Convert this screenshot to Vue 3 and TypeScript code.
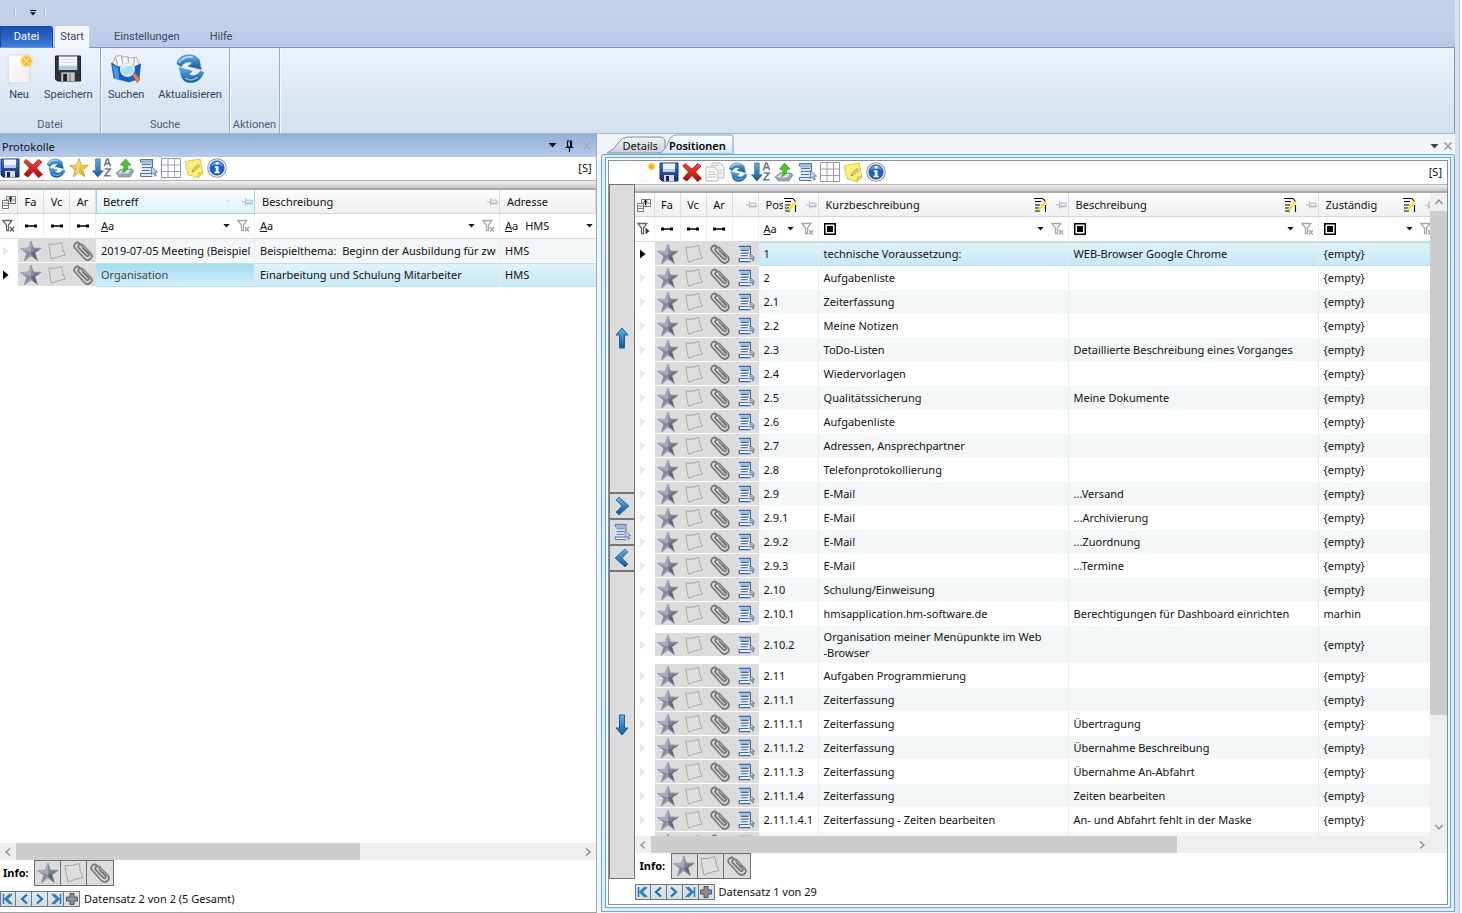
<script setup lang="ts">
interface ToolItem { icon: string; label: string }
interface Position { nr: string; title: string; text: string; who: string; tall?: boolean }

const tools: ToolItem[] = [
  { icon: 'disk', label: 'Speichern' },
  { icon: 'cross', label: 'Löschen' },
  { icon: 'refresh', label: 'Aktualisieren' },
  { icon: 'gold', label: 'Favorit' },
  { icon: 'sort', label: 'Sortieren' },
  { icon: 'export', label: 'Exportieren' },
  { icon: 'list', label: 'Liste' },
  { icon: 'grid', label: 'Tabelle' },
  { icon: 'sticky', label: 'Notiz' },
  { icon: 'info', label: 'Info' },
]
const positionTools: ToolItem[] = [
  { icon: 'newdoc', label: 'Neu' },
  ...tools.map((t) => (t.icon === 'gold' ? { icon: 'copy', label: 'Kopieren' } : t)),
]
// the copy action sits in front of the refresh action
const copyAt = positionTools.findIndex((t) => t.icon === 'copy')
positionTools.splice(copyAt - 1, 0, ...positionTools.splice(copyAt, 1))

const marks = ['star', 'note', 'clip']
const markLabels = ['Favorit', 'Notiz', 'Anhang']
const shortHeads = ['Fa', 'Vc', 'Ar']
const navs: ToolItem[] = [
  { icon: 'first', label: 'Erster Datensatz' },
  { icon: 'prev', label: 'Vorheriger Datensatz' },
  { icon: 'next', label: 'Nächster Datensatz' },
  { icon: 'last', label: 'Letzter Datensatz' },
  { icon: 'plus', label: 'Neuer Datensatz' },
]

const protocols = [
  { subject: '2019-07-05 Meeting (Beispiel)', text: 'Beispielthema:  Beginn der Ausbildung für zwei', address: 'HMS' },
  { subject: 'Organisation', text: 'Einarbeitung und Schulung Mitarbeiter', address: 'HMS' },
]
const selectedProtocol = 1

const e = '{empty}'
const positions: Position[] = [
  { nr: '1', title: 'technische Voraussetzung:', text: 'WEB-Browser Google Chrome', who: e },
  { nr: '2', title: 'Aufgabenliste', text: '', who: e },
  { nr: '2.1', title: 'Zeiterfassung', text: '', who: e },
  { nr: '2.2', title: 'Meine Notizen', text: '', who: e },
  { nr: '2.3', title: 'ToDo-Listen', text: 'Detaillierte Beschreibung eines Vorganges', who: e },
  { nr: '2.4', title: 'Wiedervorlagen', text: '', who: e },
  { nr: '2.5', title: 'Qualitätssicherung', text: 'Meine Dokumente', who: e },
  { nr: '2.6', title: 'Aufgabenliste', text: '', who: e },
  { nr: '2.7', title: 'Adressen, Ansprechpartner', text: '', who: e },
  { nr: '2.8', title: 'Telefonprotokollierung', text: '', who: e },
  { nr: '2.9', title: 'E-Mail', text: '...Versand', who: e },
  { nr: '2.9.1', title: 'E-Mail', text: '...Archivierung', who: e },
  { nr: '2.9.2', title: 'E-Mail', text: '...Zuordnung', who: e },
  { nr: '2.9.3', title: 'E-Mail', text: '...Termine', who: e },
  { nr: '2.10', title: 'Schulung/Einweisung', text: '', who: e },
  { nr: '2.10.1', title: 'hmsapplication.hm-software.de', text: 'Berechtigungen für Dashboard einrichten', who: 'marhin' },
  { nr: '2.10.2', title: 'Organisation meiner Menüpunkte im Web\n-Browser', text: '', who: e, tall: true },
  { nr: '2.11', title: 'Aufgaben Programmierung', text: '', who: e },
  { nr: '2.11.1', title: 'Zeiterfassung', text: '', who: e },
  { nr: '2.11.1.1', title: 'Zeiterfassung', text: 'Übertragung', who: e },
  { nr: '2.11.1.2', title: 'Zeiterfassung', text: 'Übernahme Beschreibung', who: e },
  { nr: '2.11.1.3', title: 'Zeiterfassung', text: 'Übernahme An-Abfahrt', who: e },
  { nr: '2.11.1.4', title: 'Zeiterfassung', text: 'Zeiten bearbeiten', who: e },
  { nr: '2.11.1.4.1', title: 'Zeiterfassung - Zeiten bearbeiten', text: 'An- und Abfahrt fehlt in der Maske', who: e },
  { nr: '', title: '', text: '', who: '' },
]
</script>

<template>
  <svg class="sprite" aria-hidden="true">
    <defs>
      <linearGradient id="gBlue" x1="0" y1="0" x2="0" y2="1"><stop offset="0" stop-color="#62b4e6" /><stop offset="1" stop-color="#10529b" /></linearGradient>
      <linearGradient id="gNavy" x1="0" y1="0" x2="0" y2="1"><stop offset="0" stop-color="#4a78c8" /><stop offset="1" stop-color="#0b2a78" /></linearGradient>
      <linearGradient id="gGold" x1="0" y1="0" x2="0" y2="1"><stop offset="0" stop-color="#ffe680" /><stop offset="1" stop-color="#e0a018" /></linearGradient>
      <linearGradient id="gSteel" x1="0" y1="0" x2="1" y2="1"><stop offset="0" stop-color="#a9aebc" /><stop offset="1" stop-color="#5a6278" /></linearGradient>
      <linearGradient id="gRed" x1="0" y1="0" x2="0" y2="1"><stop offset="0" stop-color="#ee4a3c" /><stop offset="1" stop-color="#a80c10" /></linearGradient>
      <radialGradient id="gSun"><stop offset="0" stop-color="#ff9a10" /><stop offset="0.55" stop-color="#fdbb2a" /><stop offset="1" stop-color="#ffe070" stop-opacity="0" /></radialGradient>
      <linearGradient id="gPaper" x1="0" y1="0" x2="1" y2="1"><stop offset="0" stop-color="#ffffff" /><stop offset="1" stop-color="#f2efec" /></linearGradient>
    </defs>
    <symbol id="disk" viewBox="0 0 20 20"><path d="M1 1h18v18H3l-2-2z" fill="url(#gNavy)" stroke="#132c78" /><path d="M4 1.500h12v8H4z" fill="#eef4fc" /><path d="M4 7h12v3H4z" fill="#b8cdea" /><path d="M5 13h10v6H5z" fill="#d6dae6" /><path d="M7 14h3v5H7z" fill="#10205c" /></symbol>
    <symbol id="cross" viewBox="0 0 20 20"><path d="M3 1.500l7 5.500 5.500-5.500 3.500 2.500-5.500 6 6 6.500-4 3L10 13.500 5 19l-4-2.500L6.500 10 .8 4z" fill="url(#gRed)" stroke="#a01414" stroke-width=".8" /></symbol>
    <symbol id="refresh" viewBox="0 0 32 32"><path d="M2 11C3 4 11 .5 17 1.500c4 .5 7 2.500 9 5.500l2 10-14-3.500 4.500-3.500C15 8 9 9 6.500 14z" fill="url(#gBlue)" stroke="#2d78b4" stroke-width=".6" /><path d="M30.500 20c-1.500 7-8 11.500-14 11-5 0-8-2.500-9.500-6L4.500 15l14 4-4 3.500c4 2.500 9 1 12.500-3.500z" fill="url(#gBlue)" stroke="#2d78b4" stroke-width=".6" /><path d="M4 10c3-5 9-7.500 15-6" fill="none" stroke="#a9d8f3" stroke-width="2" /><path d="M11 26c4 3 9 2.500 13-.5" fill="none" stroke="#7cc0ea" stroke-width="1.500" /></symbol>
    <symbol id="gold" viewBox="0 0 20 20"><path d="M10 .5l2.400 6.700 7.100.2-5.700 4.400 2.100 7L10 14.700 4.200 19l2-7.100L.5 7.500l7.100-.3z" fill="url(#gGold)" stroke="#c09030" stroke-width=".7" /><path d="M10 1v13.500L4.300 19l3-7z" fill="#fff3b0" opacity=".5" /></symbol>
    <symbol id="sort" viewBox="0 0 22 22"><path d="M4 1h5v13h3.500L6.500 21 .5 14H4z" fill="url(#gBlue)" stroke="#1c5a94" stroke-width=".7" /><path d="M13.500 9l3-8h1l3 8M14.500 6.200h5M14 12h6l-6 7.500h6.500" fill="none" stroke="#72787f" stroke-width="1.700" /></symbol>
    <symbol id="export" viewBox="0 0 20 20"><path d="M1 15l5-4h11l2 2-4 6H4z" fill="#9ba8b4" stroke="#71808e" stroke-width=".6" /><path d="M3 15l4-3h9l-3 3.500H4z" fill="#dbe4ea" /><path d="M10.500 1l5.500 6-3 .3c0 4-1.500 6-5.500 7.200 1.500-2.500 1.500-4.500 1.200-7L5.500 7z" fill="#4ec234" stroke="#2c9422" stroke-width=".7" /></symbol>
    <symbol id="list" viewBox="0 0 20 20"><path d="M3 1.500h11v17H3z" fill="#dfe9f6" /><path d="M3 1.500h11v4H3z" fill="#9db9dc" /><path d="M14.500 1v8M2.500 1.500h12M4 6.500h9M4 9.500h9M4 12.500h8M2.500 15.500h12M2.500 18.500h12M2.500 1.500v3M2.500 15v3" fill="none" stroke="#54759f" stroke-width="1.100" /><path d="M13.500 8.500v8l2-1.500 1.500 3.200 1.300-.8-1.400-3 2.600-.4z" fill="#c3d3e8" stroke="#506d94" stroke-width=".8" /></symbol>
    <symbol id="grid" viewBox="0 0 20 20"><path d="M.5.500h19v19H.5z" fill="#fff" stroke="#9397a2" /><path d="M7 .5v19M13.500.5v19M.5 7h19M.5 13.500h19" stroke="#9ca0ad" /></symbol>
    <symbol id="sticky" viewBox="0 0 20 20"><path d="M1 3.500L16 1l3 14-5 4.500L4 17z" fill="#fbee7a" stroke="#d3bc3c" stroke-width=".8" /><path d="M14 19.500l.5-5 4.500.5z" fill="#f6d84c" stroke="#c7ac32" stroke-width=".5" /><path d="M8 14l1-2.500 5-5 1.500 1.500-5 5z" fill="#f8df74" stroke="#8c8244" stroke-width=".8" /></symbol>
    <symbol id="info" viewBox="0 0 22 22"><circle cx="11" cy="11" r="10.200" fill="#fff" stroke="#8a94a4" stroke-width="1.200" /><circle cx="11" cy="11" r="8" fill="#1f5fbf" stroke="#18458e" stroke-width=".6" /><path d="M4.500 9a6.700 6.700 0 0113 0c-4-2-9-2-13 0z" fill="#5f9be4" /><path d="M9.700 4.500h3v2.600h-3zM8.500 9h4.200v6h1.300v1.700H8.300V15h1.400v-4.300H8.500z" fill="#fff" /></symbol>
    <symbol id="copy" viewBox="0 0 20 20"><path d="M7 1h8l4 4v11H7z" fill="#f2f3f4" stroke="#b9bdc2" /><path d="M1 5h8l4 4v10H1z" fill="#f8f8f8" stroke="#b4b8bd" /><path d="M3 10h7M3 12.500h8M3 15h8M14 8h3M14 11h3M9 3.500h4" stroke="#c3c6ca" /></symbol>
    <symbol id="newdoc" viewBox="0 0 20 20"><path d="M2 3h13v16H2z" fill="#fdfdfd" /><path d="M2 19h13" stroke="#f1f1f1" /><circle cx="15.500" cy="4.500" r="4.500" fill="url(#gSun)" /></symbol>
    <symbol id="star" viewBox="0 0 22 22"><path d="M11 1l2.400 7 7.800.2-6.300 4.600 2.500 7.700-6.400-4.700L4.400 21l2.300-7.800L.5 8.500l7.700-.3z" fill="url(#gSteel)" stroke="#858b9a" stroke-width=".7" /><path d="M11 1v12L.5 8.500l7.700-.3zM11 13L4.400 21l6.600-5.200z" fill="#bfc3cd" opacity=".55" /><path d="M11 13l10.200-4.800-6.300 4.600 2.500 7.700z" fill="#4e566c" opacity=".55" /></symbol>
    <symbol id="note" viewBox="0 0 22 22"><path d="M2 3.500Q10 4.500 16 1.500q1 9 4 14-7 1-15 4.500Q3 12 2 3.500z" fill="#dedede" stroke="#a2a2a2" stroke-width="1" /></symbol>
    <symbol id="clip" viewBox="0 0 22 22"><path d="M14.500 10.500L7.800 3.600C4.800.8.300 5 3.200 8.200l9.500 10.500c3.400 3.400 9.300-.8 6.200-5L10.500 5C8 2.800 4.800 5.800 7 8.200l7.300 7.500c1.800 1.400 3.400-.6 2-2.200L10 7.200" fill="none" stroke="#787674" stroke-width="1.800" /><path d="M3.500 7.500L13 18M8 4l6 6M11 5.500l7.500 8" stroke="#c8c6c3" stroke-width=".6" /></symbol>
    <symbol id="doc" viewBox="0 0 20 20"><path d="M3 1.500h12v17H3z" fill="#e6eef8" /><path d="M3 1.500h12v4H3z" fill="#a3c0e6" /><path d="M2 1.500h13v8M4 6h9M4 9h9M4 12h8M2 15h11M2 18.500h13M2.500 15v3.500" fill="none" stroke="#43699f" stroke-width="1.200" /><path d="M14.500 9v7l1.700-1.300 1.300 2.800 1.300-.6-1.200-2.800h2z" fill="#a9bdd8" stroke="#4b6a96" stroke-width=".8" /></symbol>
    <symbol id="up" viewBox="0 0 14 22"><path d="M7 1l6 7H9.500v13h-5V8H1z" fill="url(#gBlue)" stroke="#1d5f9f" /></symbol>
    <symbol id="down" viewBox="0 0 14 22"><path d="M7 21l6-7H9.500V1h-5v13H1z" fill="url(#gBlue)" stroke="#1d5f9f" /></symbol>
    <symbol id="bigright" viewBox="0 0 16 20"><path d="M2 4l3-3 10 9L5 19l-3-3 6-6z" fill="url(#gBlue)" stroke="#2c608f" stroke-width=".8" /></symbol>
    <symbol id="bigleft" viewBox="0 0 16 20"><path d="M14 4l-3-3L1 10l10 9 3-3-6-6z" fill="url(#gBlue)" stroke="#2c608f" stroke-width=".8" /></symbol>
    <symbol id="first" viewBox="0 0 14 14"><path d="M2.500 2v10M11 2L6 7l5 5M9 2L4 7l5 5" fill="none" stroke="#2f7fb8" stroke-width="1.600" /></symbol>
    <symbol id="prev" viewBox="0 0 14 14"><path d="M10 2.500L5 7l5 4.500" fill="none" stroke="#24709f" stroke-width="2.200" /></symbol>
    <symbol id="next" viewBox="0 0 14 14"><path d="M4 2.500L9 7l-5 4.500" fill="none" stroke="#24709f" stroke-width="2.200" /></symbol>
    <symbol id="last" viewBox="0 0 14 14"><path d="M11.500 2v10M3 2l5 5-5 5M5 2l5 5-5 5" fill="none" stroke="#2f7fb8" stroke-width="1.600" /></symbol>
    <symbol id="plus" viewBox="0 0 14 14"><path d="M5 1.500h4V5h3.500v4H9v3.500H5V9H1.500V5H5z" fill="#8f8f8f" stroke="#555" /></symbol>
    <symbol id="pin" viewBox="0 0 12 10"><path d="M0 5h4M4 1v8M4 3h7v4H4M4 6h7" fill="none" stroke="#a5b4c4" /></symbol>
    <symbol id="funnel" viewBox="0 0 14 14"><path d="M.8 1.500h9L6.500 6v5.500H4.500V6z" fill="#fff" stroke="currentColor" stroke-width="1.300" /><path d="M8 8l4 4.500M12 8l-4 4.500" stroke="currentColor" stroke-width="1.500" /></symbol>
    <symbol id="funnelrun" viewBox="0 0 14 14"><path d="M.8 1.500h9L6.500 6v5.500H4.500V6z" fill="#fff" stroke="#666" stroke-width="1.300" /><path d="M8.500 5.500v7L12.500 9z" fill="#444" /></symbol>
    <symbol id="dash" viewBox="0 0 14 6"><path d="M1 3h12" stroke="#000" stroke-width="1.500" /><path d="M1 1.500h3v3H1zM10 1.500h3v3h-3z" /></symbol>
    <symbol id="tri" viewBox="0 0 8 5"><path d="M0 0h8L4 4.500z" fill="currentColor" /></symbol>
    <symbol id="fields" viewBox="0 0 14 14"><path d="M4.500 1.500h9v7h-9zM4.500 5h9M9 1.500v7" fill="#fff" stroke="#777" /><path d="M.5 5.500h6v8h-6zM.5 8h6M.5 10.500h6" fill="#fff" stroke="#777" /><path d="M8.500 7V2M7 4l1.500-2L10 4" fill="none" stroke="#000" stroke-width="1" /></symbol>
    <symbol id="edit" viewBox="0 0 14 16"><path d="M1 1.500h9M2 4.500h6M2 8h5M2 11h4M2 14h5M10 1.500l2.500 3M12.500 8v7" fill="none" stroke="#000" stroke-width="1.100" /><path d="M5.500 13l7-8" stroke="#f3ea00" stroke-width="2.200" /></symbol>
    <symbol id="square" viewBox="0 0 12 12"><path d="M.75.750h10.500v10.500H.75z" fill="#fff" stroke="#000" stroke-width="1.500" /><path d="M3 3h6v6H3z" /></symbol>
    <symbol id="bignew" viewBox="0 0 32 32"><path d="M4.500 1.500h23v30h-23z" fill="url(#gPaper)" stroke="#d9d4d2" /><circle cx="24" cy="8" r="7.800" fill="url(#gSun)" /><path d="M21 5l6 6M27 5l-6 6" stroke="#fff0a0" stroke-width="1.500" /></symbol>
    <symbol id="bigdisk" viewBox="0 0 28 28"><path d="M1 1h26v26H3l-2-2z" fill="#30343a" stroke="#1a1c20" /><path d="M4.500 1.500h19v14h-19z" fill="#f4f8fb" /><path d="M4.500 11h19v4.500h-19z" fill="#a9cfe4" /><path d="M6 4.500h16M6 7.500h16" stroke="#cfdae2" /><path d="M7 18h14v9H7z" fill="#c3c5c8" /><path d="M9 19.500h4V27H9z" fill="#222" /><path d="M16 19v8" stroke="#8d9094" stroke-width="2" /></symbol>
    <symbol id="bigsearch" viewBox="0 0 32 32"><path d="M5 3l6-1 1 2 6-1 1 2 8-1 3 8-3 8H5L2 9z" fill="#f6f6f6" stroke="#9a9a9a" stroke-width=".8" /><path d="M5 4l2 9M11 3l2 9M18 4l1 8M25 5l-1 8" stroke="#8d8d8d" stroke-width=".9" /><path d="M.5 10l6.500 4h18l6.500-3-1.500 16-11 3.500L3 26z" fill="#1560c4" stroke="#0f4798" stroke-width=".6" /><path d="M1.500 12l6 4 1.500 13-5-3z" fill="#4c98e8" /><path d="M23 23l3-2 5 7-3 3z" fill="#ea8440" stroke="#b4571c" stroke-width=".7" /><circle cx="17.500" cy="17" r="7" fill="#a9dcf6" stroke="#dfe6ec" stroke-width="2" /><path d="M13 15c1-3 5-4 8-2" fill="none" stroke="#fff" stroke-width="1.600" /></symbol>
    <symbol id="vpin" viewBox="0 0 9 12"><path d="M2.500 1v6h4V1zM5.500 1v6M.5 7.500h8M4.500 8v4" fill="none" stroke="#111" stroke-width="1.200" /></symbol>
    <symbol id="close" viewBox="0 0 10 10"><path d="M1.500 1.500l7 7M8.500 1.500l-7 7" fill="none" stroke="currentColor" stroke-width="1.700" /></symbol>
    <symbol id="chev" viewBox="0 0 10 10"><path d="M7 1.500L3 5l4 3.500" fill="none" stroke="#8d8d8d" stroke-width="1.400" /></symbol>
    <symbol id="rowmark" viewBox="0 0 7 10"><path d="M1 .5v9L6.500 5z" fill="currentColor" /></symbol>
  </svg>

  <div class="app">
    <div class="window">
      <header class="titlebar">
        <i class="tick"></i>
        <button class="quick" aria-label="Schnellzugriff anpassen"><i class="bar"></i><svg class="tri"><use href="#tri" /></svg></button>
        <i class="tick"></i>
      </header>
      <nav class="tabs">
        <button class="file">Datei</button>
        <button class="active">Start</button>
        <button class="wide">Einstellungen</button>
        <button>Hilfe</button>
      </nav>
      <section class="ribbon">
        <div class="group">
          <div class="cmds">
            <button class="cmd neu"><svg><use href="#bignew" /></svg>Neu</button>
            <button class="cmd"><svg class="sm"><use href="#bigdisk" /></svg>Speichern</button>
          </div>
          <span class="caption">Datei</span>
        </div>
        <div class="group search">
          <div class="cmds">
            <button class="cmd"><svg><use href="#bigsearch" /></svg>Suchen</button>
            <button class="cmd"><svg><use href="#refresh" /></svg>Aktualisieren</button>
          </div>
          <span class="caption">Suche</span>
        </div>
        <div class="group actions"><span class="caption">Aktionen</span></div>
      </section>

      <main class="docks">
        <section class="left">
          <header class="dockhead">
            <span>Protokolle</span>
            <button class="bare" aria-label="Fenstermenü"><svg class="tri"><use href="#tri" /></svg></button>
            <button class="bare" aria-label="Anheften"><svg class="vpin"><use href="#vpin" /></svg></button>
            <button class="bare dim" aria-label="Schließen"><svg class="close"><use href="#close" /></svg></button>
          </header>
          <div class="toolbar">
            <button v-for="t in tools" :key="t.icon" class="tool" :aria-label="t.label"><svg><use :href="'#' + t.icon" /></svg></button>
            <span class="state">[S]</span>
          </div>
          <div class="splitter"></div>
          <div class="gridbox">
            <table class="grid protocols">
              <colgroup><col class="w18" /><col class="w26" /><col class="w26" /><col class="w26" /><col class="w159" /><col class="w245" /><col /></colgroup>
              <thead>
                <tr class="head">
                  <th><svg class="i14"><use href="#fields" /></svg></th>
                  <th v-for="h in shortHeads" :key="h" class="short">{{ h }}</th>
                  <th class="sorted"><div class="hc"><span>Betreff</span><svg class="tri pale"><use href="#tri" /></svg><svg class="pin"><use href="#pin" /></svg></div></th>
                  <th><div class="hc"><span>Beschreibung</span><svg class="pin"><use href="#pin" /></svg></div></th>
                  <th><div class="hc"><span>Adresse</span></div></th>
                </tr>
                <tr class="filter">
                  <td class="dark"><svg class="i14"><use href="#funnel" /></svg></td>
                  <td v-for="h in shortHeads" :key="h" class="mid"><svg class="dash"><use href="#dash" /></svg></td>
                  <td v-for="n in 2" :key="n"><div class="fc"><u>A</u>a<button class="bare push" aria-label="Filterwerte"><svg class="arrow"><use href="#tri" /></svg></button><button class="bare dim" aria-label="Filter löschen"><svg class="i14"><use href="#funnel" /></svg></button></div></td>
                  <td><div class="fc"><u>A</u>a<input class="query" value="HMS" aria-label="Filter Adresse" /><button class="bare" aria-label="Filterwerte"><svg class="arrow"><use href="#tri" /></svg></button></div></td>
                </tr>
              </thead>
              <tbody>
                <tr v-for="(p, i) in protocols" :key="p.subject" :class="{ alt: i % 2 === 0, selected: i === selectedProtocol }">
                  <td class="gutter"><svg class="mark"><use href="#rowmark" /></svg></td>
                  <td v-for="m in marks" :key="m" class="icon"><div><svg :class="m"><use :href="'#' + m" /></svg></div></td>
                  <td class="subject"><div class="txt">{{ p.subject }}</div></td>
                  <td><div class="txt">{{ p.text }}</div></td>
                  <td><div class="txt">{{ p.address }}</div></td>
                </tr>
              </tbody>
            </table>
          </div>
          <div class="hscroll"><svg class="chev"><use href="#chev" /></svg><div class="track"><div class="thumb left-thumb"></div></div><svg class="chev flip"><use href="#chev" /></svg></div>
          <div class="inforow"><b>Info:</b><div class="infos"><button v-for="(m, i) in marks" :key="m" :aria-label="markLabels[i]"><svg><use :href="'#' + m" /></svg></button></div></div>
          <div class="pager"><button v-for="n in navs" :key="n.icon" :aria-label="n.label"><svg><use :href="'#' + n.icon" /></svg></button><span>Datensatz 2 von 2 (5 Gesamt)</span></div>
        </section>

        <section class="right">
          <header class="doctabs">
            <svg class="tabshapes" aria-hidden="true" viewBox="0 0 140 20"><defs><linearGradient id="tabA" x1="0" y1="0" x2="0" y2="1"><stop offset="0" stop-color="#f2f4f8" /><stop offset="1" stop-color="#c6cfdd" /></linearGradient><linearGradient id="tabB" x1="0" y1="0" x2="0" y2="1"><stop offset="0" stop-color="#fff" /><stop offset="1" stop-color="#d5e8f9" /></linearGradient></defs><path d="M4 19Q11 16 15 9q4-6 10-6h32q5 0 5 5v11z" fill="url(#tabA)" stroke="#7d8da4" /><path d="M56 20Q62 17 65 9q2-8 9-8h54q2 0 2 2v17z" fill="url(#tabB)" stroke="#6aa5c9" /></svg>
            <button class="dt first">Details</button>
            <button class="dt current">Positionen</button>
            <button class="bare push" aria-label="Tabliste"><svg class="tri"><use href="#tri" /></svg></button>
            <button class="bare shut" aria-label="Schließen"><svg class="close"><use href="#close" /></svg></button>
          </header>
          <div class="frame"><div class="frame2"><div class="content">
            <div class="toolbar indented">
              <button v-for="t in positionTools" :key="t.icon" class="tool" :aria-label="t.label"><svg><use :href="'#' + t.icon" /></svg></button>
              <span class="state">[S]</span>
            </div>
            <div class="work">
              <aside class="mover">
                <button class="stretch" aria-label="Nach oben"><svg class="v"><use href="#up" /></svg></button>
                <button aria-label="Einrücken"><svg class="h"><use href="#bigright" /></svg></button>
                <button aria-label="Liste"><svg class="l"><use href="#list" /></svg></button>
                <button aria-label="Ausrücken"><svg class="h"><use href="#bigleft" /></svg></button>
                <button class="stretch" aria-label="Nach unten"><svg class="v"><use href="#down" /></svg></button>
              </aside>
              <div class="panel">
                <div class="splitter"></div>
                <div class="scroller">
                  <div class="gridbox">
                    <table class="grid positions">
                      <colgroup><col class="w20" /><col class="w26" /><col class="w26" /><col class="w26" /><col class="w26" /><col class="w60" /><col class="w250" /><col class="w250" /><col /></colgroup>
                      <thead>
                        <tr class="head">
                          <th><svg class="i14"><use href="#fields" /></svg></th>
                          <th v-for="h in shortHeads" :key="h" class="short">{{ h }}</th>
                          <th><div class="hc"><svg class="pin"><use href="#pin" /></svg></div></th>
                          <th><div class="hc narrow"><span>Pos</span><svg class="edit"><use href="#edit" /></svg><svg class="pin"><use href="#pin" /></svg></div></th>
                          <th v-for="h in ['Kurzbeschreibung', 'Beschreibung', 'Zuständig']" :key="h"><div class="hc"><span>{{ h }}</span><svg class="edit"><use href="#edit" /></svg><svg class="pin"><use href="#pin" /></svg></div></th>
                        </tr>
                        <tr class="filter">
                          <td><svg class="i14"><use href="#funnelrun" /></svg></td>
                          <td v-for="h in shortHeads" :key="h" class="mid"><svg class="dash"><use href="#dash" /></svg></td>
                          <td></td>
                          <td><div class="fc"><u>A</u>a<button class="bare push" aria-label="Filterwerte"><svg class="arrow"><use href="#tri" /></svg></button><button class="bare dim" aria-label="Filter löschen"><svg class="i14"><use href="#funnel" /></svg></button></div></td>
                          <td v-for="n in 3" :key="n"><div class="fc"><svg class="sq"><use href="#square" /></svg><button class="bare push" aria-label="Filterwerte"><svg class="arrow"><use href="#tri" /></svg></button><button class="bare dim" aria-label="Filter löschen"><svg class="i14"><use href="#funnel" /></svg></button></div></td>
                        </tr>
                      </thead>
                      <tbody>
                        <tr v-for="(p, i) in positions" :key="p.nr" :class="{ alt: i % 2 === 0, selected: i === 0, tall: p.tall }">
                          <td class="gutter"><svg class="mark"><use href="#rowmark" /></svg></td>
                          <td v-for="m in [...marks, 'doc']" :key="m" class="icon"><div><svg :class="m"><use :href="'#' + m" /></svg></div></td>
                          <td class="nr"><div class="txt">{{ p.nr }}</div></td>
                          <td><div class="txt">{{ p.title }}</div></td>
                          <td><div class="txt">{{ p.text }}</div></td>
                          <td><div class="txt">{{ p.who }}</div></td>
                        </tr>
                      </tbody>
                    </table>
                  </div>
                  <div class="vscroll"><svg class="chev top"><use href="#chev" /></svg><div class="vtrack"><div class="vthumb"></div></div><svg class="chev bottom"><use href="#chev" /></svg></div>
                </div>
                <div class="hscroll"><svg class="chev"><use href="#chev" /></svg><div class="track"><div class="thumb right-thumb"></div></div><svg class="chev flip"><use href="#chev" /></svg><i class="corner"></i></div>
                <div class="inforow"><b>Info:</b><div class="infos"><button v-for="(m, i) in marks" :key="m" :aria-label="markLabels[i]"><svg><use :href="'#' + m" /></svg></button></div></div>
              </div>
            </div>
            <div class="pager lower"><button v-for="n in navs" :key="n.icon" :aria-label="n.label"><svg><use :href="'#' + n.icon" /></svg></button><span>Datensatz 1 von 29</span></div>
          </div></div></div>
        </section>
      </main>
    </div>
    <div class="edge"></div>
  </div>
</template>

<style>
html, body, #app { height: 100%; }
body { margin: 0; overflow: hidden; background: #fff; }
</style>

<style scoped>
* { box-sizing: border-box; }
.sprite { position: absolute; width: 0; height: 0; }
svg { display: block; flex: none; }
button, input { font: inherit; color: inherit; padding: 0; border: 0; background: none; }
button { display: flex; align-items: center; justify-content: center; }
.app { display: flex; height: 100vh; padding-right: 2px; font: 11px/16px "Noto Sans", "Open Sans", sans-serif; color: #111; }
.window { flex: 1; min-width: 0; display: flex; flex-direction: column; }
.edge { width: 5px; background: #d6e1f1; border-right: 1px solid #bfc5d8; }

.titlebar { height: 26px; display: flex; align-items: center; padding-left: 14px; background: linear-gradient(#c3d4ea, #bfd0e8); }
.tick { width: 2px; height: 8px; border-left: 1px solid #a9b8d0; background: #e7eef8; }
.titlebar .tick:last-child { margin-left: 8px; }
.quick { flex-direction: column; gap: 1px; margin-left: 14px; }
.bar { width: 6px; height: 1px; background: #000; }
.tri { width: 9px; height: 5px; }
.quick .tri { width: 6px; height: 4px; }
.tabs, .ribbon { font-family: Roboto, "Noto Sans", sans-serif; }
.tabs { height: 22px; display: flex; gap: 2px; color: #3a4660; background: linear-gradient(#bfd0e8, #b8cae5); border-bottom: 1px solid #7d93bd; }
.tabs button { padding: 0 11px; }
.tabs .file { width: 53px; color: #fff; background: linear-gradient(#1f4fae, #2a62c4 50%, #3f7ede); border-radius: 0 3px 0 0; border: 1px solid #1d479a; border-bottom: 0; }
.tabs .active { width: 34px; padding: 0; height: 22px; background: #f4f8fe; border-radius: 2px 2px 0 0; }
.tabs .wide { margin-left: 12px; margin-right: 6px; }
.ribbon { height: 86px; display: flex; color: #33405c; background: linear-gradient(#edf3fd, #dbe6f3 60%, #d4e2f0); border-bottom: 1px solid #a8b6cb; border-right: 1px solid #8596b8; }
.group { display: flex; flex-direction: column; justify-content: space-between; align-items: center; width: 101px; padding: 4px 0 0 0; border-right: 1px solid #9daac2; box-shadow: 1px 0 #f3f7fc; }
.group.search { width: 129px; }
.group.actions { width: 50px; justify-content: flex-end; }
.cmds { display: flex; width: 100%; }
.cmd { flex-direction: column; justify-content: flex-start; gap: 2px; padding: 0 6px; }
.cmd svg { width: 32px; height: 33px; padding: 1px; }
.cmd svg.sm { padding: 3px 2px; }
.cmd.neu { padding: 0 3px; }
.search .cmd { padding: 0 7px; }
.caption { color: #4d5a78; }

.docks { flex: 1; min-height: 0; display: flex; background: #f1f6fc; }
.left { width: 41%; max-width: 597px; flex: none; display: flex; flex-direction: column; background: #fff; border-right: 1px solid #a3aab6; border-bottom: 1px solid #a0a0a0; padding-bottom: 5px; }
.dockhead { height: 23px; display: flex; align-items: center; gap: 8px; padding: 0 4px 0 2px; background: linear-gradient(#91b0d8, #b7cbe9); }
.dockhead span { flex: 1; padding-top: 2px; }
.vpin { width: 9px; height: 12px; }
.close { width: 10px; height: 10px; }
.dim { color: #a8a8a8; }
.toolbar { height: 23px; display: flex; align-items: center; gap: 3px; padding-bottom: 1px; }
.tool svg { width: 20px; height: 20px; }
.state { margin-left: auto; padding-right: 4px; }
.splitter { height: 10px; flex: none; border-top: 1px solid #b4b4b4; border-bottom: 2px solid #a8a8ac; background: linear-gradient(#f0f0f0, #c8c8ca); }
.panel .splitter { height: 9px; }
.gridbox { flex: 1; min-height: 0; min-width: 0; overflow: hidden; }
.grid { table-layout: fixed; border-spacing: 0; width: 100%; }
.positions { width: calc(100% + 8px); }
.w18 { width: 18px; } .w20 { width: 20px; } .w26 { width: 26px; } .w60 { width: 60px; }
.w159 { width: 159px; } .w245 { width: 245px; } .w250 { width: 250px; }
th, td { padding: 0; overflow: hidden; white-space: nowrap; text-align: left; font-weight: 400; vertical-align: middle; }
.head th { height: 24px; background: linear-gradient(#fff, #f6f6f7 45%, #f0f1f3); border-right: 1px solid #dadde1; border-bottom: 1px solid #d5d7da; }
.head .short { text-align: center; }
.head .sorted { background: linear-gradient(#fcfeff, #dff2fa); border-left: 1px solid #9fd5ea; border-right-color: #9fd5ea; border-bottom-color: #9fd5ea; }
.hc { display: flex; align-items: center; gap: 9px; padding: 0 1px 0 7px; justify-content: flex-end; }
.sorted .hc { padding-left: 6px; }
.hc span { flex: 1; overflow: hidden; }
.narrow { gap: 0; }
.narrow .pin { margin-left: 9px; }
.pin { width: 11px; height: 10px; }
.edit { width: 14px; height: 16px; }
.pale { color: #d5dfe6; height: 3px; }
.i14 { width: 14px; height: 14px; margin: 0 auto; }
.filter td { height: 25px; border-right: 1px solid #eef0f2; border-bottom: 1px solid #d9dcdf; background: #fff; }
.dark { color: #666; }
.mid svg { width: 14px; height: 6px; margin: 0 auto; }
.fc { display: flex; align-items: center; padding: 0 3px 0 5px; }
.arrow { width: 7px; height: 4px; }
.push { margin-left: auto; }
.fc .dim { margin-left: 7px; }
.sq { width: 12px; height: 12px; }
.query { width: 30px; flex: 1; margin-left: 7px; outline: 0; }
tbody td { height: 24px; border-right: 1px solid #e6edf1; border-bottom: 1px solid #fff; }
tbody td.gutter, tbody td.icon { border-right: 0; background: #fff; }
.protocols td:last-child { border-right: 0; }
.alt td { background: #f3f7f8; }
.alt td.gutter { background: #fff; }
.selected td, .selected.alt td { background: linear-gradient(#e1f2f9, #c6e9f6); border-top: 1px solid #b4dff0; border-bottom: 1px solid #b9e1ef; }
.selected td.gutter, .selected td.icon, .selected.alt td.gutter, .selected.alt td.icon { background: #fff; border-top: 0; border-bottom-color: #fff; }
.protocols .selected .subject { background: linear-gradient(#a5dcf2, #d0effb); color: #444; }
.mark { width: 7px; height: 10px; margin: 0 0 0 4px; color: #e9e9e9; }
.protocols .mark { margin-left: 2px; }
.selected .mark { color: #000; }
.icon div { height: 23px; display: flex; align-items: center; justify-content: center; background: #dcdcdc; }
.icon svg { width: 22px; height: 22px; }
.icon svg.doc { width: 18px; height: 20px; }
.icon svg.note { width: 20px; height: 20px; }
.txt { padding: 0 0 0 5px; margin-right: 3px; overflow: hidden; white-space: pre; }
.nr .txt { margin-right: 0; }
.tall td { height: 38px; }

.hscroll { height: 17px; flex: none; display: flex; align-items: center; background: #efefef; }
.chev { width: 10px; height: 10px; margin: 0 3px; }
.flip { transform: rotate(180deg); }
.track { flex: 1; height: 100%; }
.thumb { height: 100%; background: #cdcdcd; }
.left-thumb { width: 61%; }
.right-thumb { width: 69%; }
.corner { width: 17px; }
.inforow { height: 26px; flex: none; display: flex; align-items: center; padding-left: 3px; }
.inforow b { width: 31px; font-weight: 700; color: #000; }
.infos { display: flex; border: 1px solid #6e6e6e; }
.infos button { width: 26px; height: 24px; background: #dcdcdc; border-right: 1px solid #6e6e6e; }
.infos button:last-child { border-right: 0; }
.infos svg { width: 22px; height: 22px; }
.pager { display: flex; align-items: center; height: 16px; margin-top: 5px; flex: none; }
.pager button { width: 16px; height: 16px; border: 1px solid #777; border-left-width: 0; background: linear-gradient(#dfe8ef, #d0dbe4); }
.pager button:first-child { border-left-width: 1px; }
.pager svg { width: 14px; height: 14px; }
.pager span { padding-left: 4px; }

.right { flex: 1; min-width: 0; display: flex; flex-direction: column; padding: 0 0 1px 4px; }
.doctabs { height: 20px; flex: none; display: flex; align-items: center; position: relative; padding: 4px 2px 0 20px; }
.tabshapes { position: absolute; left: 2px; top: 0; width: 140px; height: 20px; }
.dt { position: relative; padding: 0 2px; }
.dt.current { font-weight: 600; color: #000; margin-left: 7px; }
.doctabs .tri { color: #3c4250; }
.shut { margin-left: 4px; color: #999; }
.frame { flex: 1; min-height: 0; display: flex; border: 1px solid #6fa8cb; border-radius: 3px 3px 0 0; padding: 2px 3px 3px; background: #dcecfa; }
.frame2 { flex: 1; min-width: 0; display: flex; border: 1px solid #6fa5c8; padding: 2px; background: #f4f9fe; }
.content { flex: 1; min-width: 0; display: flex; flex-direction: column; background: #fff; border: 1px solid #858d96; padding-bottom: 4px; }
.indented { padding-left: 27px; }
.content .state { padding-right: 5px; }
.work { flex: 1; min-height: 0; display: flex; }
.mover { width: 26px; display: flex; flex-direction: column; border: 1px solid #747474; background: #dcdcdc; }
.mover button { height: 26px; border-bottom: 2px solid #747474; }
.mover .stretch { flex: 1; }
.mover button:last-child { border-bottom: 0; }
.v { width: 14px; height: 22px; }
.h { width: 16px; height: 20px; }
.l { width: 18px; height: 20px; }
.panel { flex: 1; min-width: 0; display: flex; flex-direction: column; }
.panel .inforow { padding-left: 5px; }
.scroller { flex: 1; min-height: 0; display: flex; }
.vscroll { width: 17px; display: flex; flex-direction: column; align-items: center; background: #efefef; }
.vtrack { flex: 1; width: 100%; }
.vthumb { height: 83%; background: #cdcdcd; }
.top, .bottom { margin: 4px 0; }
.top { transform: rotate(90deg); }
.bottom { transform: rotate(-90deg); }
.lower { padding-left: 26px; }
</style>
